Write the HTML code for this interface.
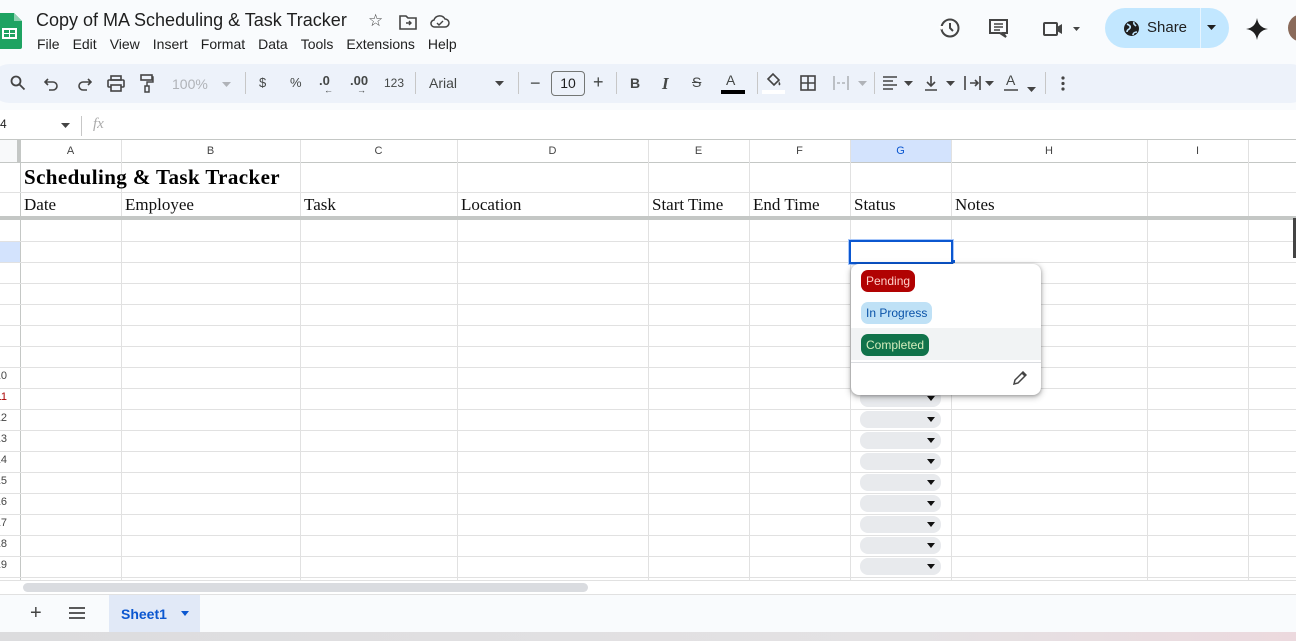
<!DOCTYPE html>
<html><head><meta charset="utf-8"><style>
*{margin:0;padding:0;box-sizing:border-box}
body{width:1296px;height:641px;overflow:hidden;background:#fff;font-family:"Liberation Sans",Arial,sans-serif;position:relative;color:#444746}
.a{position:absolute}
.v{position:absolute;top:140px;width:1px;height:441px;background:#e1e1e1}
.h{position:absolute;left:0;width:1296px;height:1px;background:#e1e1e1}
.ch{position:absolute;top:140px;height:23px;font-size:11px;color:#444;text-align:center;line-height:23px}
.serif{font-family:"Liberation Serif",serif;font-size:17px;color:#111}
.menu span{margin-right:13px}
.tb{position:absolute;top:74px;font-size:14px;color:#444746}
.rn{position:absolute;left:-13px;width:20px;font-size:11px;text-align:right;color:#444}
.chip{position:absolute;left:860px;width:81px;height:17px;border-radius:8px;background:#e8eaed}
.chip:after{content:"";position:absolute;right:6px;top:6px;border-left:4px solid transparent;border-right:4px solid transparent;border-top:5px solid #111}
</style></head><body>
<div class="a" style="left:0;top:0;width:1296px;height:63px;background:#f9fbfd"></div>
<svg class="a" style="left:0;top:13px" width="22" height="36" viewBox="0 0 22 36"><path d="M0 0h14l8 8v26a2 2 0 0 1-2 2H0z" fill="#1ea362"/><path d="M14 0v8h8z" fill="#8ed1b1"/><rect x="2" y="15" width="15" height="11" fill="#fff"/><rect x="4" y="17" width="5" height="3" fill="#1ea362"/><rect x="10" y="17" width="5" height="3" fill="#1ea362"/><rect x="4" y="21" width="5" height="3" fill="#1ea362"/><rect x="10" y="21" width="5" height="3" fill="#1ea362"/></svg>
<div class="a" style="left:36px;top:10px;font-size:18px;color:#1f1f1f">Copy of MA Scheduling &amp; Task Tracker</div>
<div class="a" style="left:368px;top:11px;font-size:17px;color:#444">☆</div>
<svg class="a" style="left:399px;top:14px" width="18" height="16"><path d="M1 2h6l2 2h8v11H1z" fill="none" stroke="#444" stroke-width="1.6"/><path d="M7 9h5m-2-2 2 2-2 2" stroke="#444" fill="none" stroke-width="1.4"/></svg>
<svg class="a" style="left:430px;top:14px" width="20" height="15"><path d="M5 13h10a4 4 0 0 0 0-8 6 6 0 0 0-11 1 3.5 3.5 0 0 0 1 7z" fill="none" stroke="#444" stroke-width="1.5"/><path d="M7 9l2 2 4-4" fill="none" stroke="#444" stroke-width="1.4"/></svg>
<div class="a menu" style="left:37px;top:36px;font-size:14px;color:#1f1f1f"><span>File</span><span>Edit</span><span>View</span><span>Insert</span><span>Format</span><span>Data</span><span>Tools</span><span>Extensions</span><span>Help</span></div>
<svg class="a" style="left:938px;top:17px" width="24" height="22"><circle cx="12" cy="11" r="8.5" fill="none" stroke="#444" stroke-width="2"/><path d="M12 6v5l3 3" stroke="#444" stroke-width="2" fill="none"/><path d="M1 9l2.5 3 3-3" fill="#fff" stroke="#fff"/></svg>
<svg class="a" style="left:988px;top:18px" width="22" height="22"><path d="M2 2h17v13h-4l3 4-6-4H2z" fill="none" stroke="#444" stroke-width="2"/><path d="M6 6h9M6 9h9M6 12h6" stroke="#444" stroke-width="1.6"/></svg>
<svg class="a" style="left:1042px;top:20px" width="42" height="18"><rect x="2" y="3" width="13" height="12" rx="1" fill="none" stroke="#444" stroke-width="2"/><path d="M15 7l5-3v10l-5-3z" fill="#444"/><path d="M31 7h7l-3.5 4z" fill="#444"/></svg>
<div class="a" style="left:1105px;top:8px;width:124px;height:40px;border-radius:20px;background:#c2e7ff"></div>
<div class="a" style="left:1200px;top:8px;width:1px;height:40px;background:#e6f4ff"></div>
<svg class="a" style="left:1123px;top:20px" width="17" height="17"><circle cx="8.5" cy="8.5" r="7.5" fill="#1f1f1f"/><path d="M4 4c2 1 4 2 3 4s-3 1-3 4M11 2c-1 2 1 3 2 4M10 15c0-2 2-3 4-3" stroke="#c2e7ff" stroke-width="1.6" fill="none"/></svg>
<div class="a" style="left:1147px;top:19px;font-size:15px;color:#1f1f1f">Share</div>
<svg class="a" style="left:1207px;top:25px" width="10" height="6"><path d="M0 0h9l-4.5 5z" fill="#1f1f1f"/></svg>
<svg class="a" style="left:1246px;top:18px" width="22" height="22"><path d="M11 0C12 6 15 10 22 11 15 12 12 16 11 22 10 16 7 12 0 11 7 10 10 6 11 0z" fill="#1f1f1f"/></svg>
<div class="a" style="left:1288px;top:14px;width:28px;height:28px;border-radius:50%;background:#8a6a5a"></div>
<div class="a" style="left:0;top:63px;width:1296px;height:47px;background:#f9fbfd"></div>
<div class="a" style="left:-10px;top:64px;width:1320px;height:39px;border-radius:20px;background:#edf2fa"></div>
<svg class="a" style="left:10px;top:75px" width="16" height="16"><circle cx="6" cy="6" r="4.5" fill="none" stroke="#444" stroke-width="1.8"/><path d="M9.5 9.5l5 5" stroke="#444" stroke-width="1.8"/></svg>
<svg class="a" style="left:44px;top:77px" width="16" height="14"><path d="M4 2L1 5l3 3M1 5h8a4 4 0 0 1 0 8H5" fill="none" stroke="#444" stroke-width="1.6"/></svg>
<svg class="a" style="left:76px;top:77px" width="16" height="14"><path d="M12 2l3 3-3 3M15 5H7a4 4 0 0 0 0 8h4" fill="none" stroke="#444" stroke-width="1.6"/></svg>
<svg class="a" style="left:107px;top:75px" width="18" height="17"><rect x="4" y="1" width="10" height="4" fill="none" stroke="#444" stroke-width="1.6"/><rect x="1" y="5" width="16" height="7" rx="1" fill="none" stroke="#444" stroke-width="1.6"/><rect x="4" y="10" width="10" height="6" fill="#edf2fa" stroke="#444" stroke-width="1.6"/></svg>
<svg class="a" style="left:140px;top:74px" width="14" height="19"><rect x="1" y="1" width="11" height="5" fill="none" stroke="#444" stroke-width="1.6"/><path d="M12 3h1v5H7v4" fill="none" stroke="#444" stroke-width="1.4"/><rect x="5" y="12" width="4" height="6" fill="none" stroke="#444" stroke-width="1.5"/></svg>
<div class="tb" style="left:172px;top:76px;color:#b0b3b8">100%</div>
<svg class="a" style="left:222px;top:82px" width="9" height="5"><path d="M0 0h9l-4.5 5z" fill="#b0b3b8"/></svg>
<div class="a" style="left:245px;top:72px;width:1px;height:22px;background:#c7c7c7"></div>
<div class="tb" style="left:259px;top:75px;font-size:13px">$</div>
<div class="tb" style="left:290px;top:75px;font-size:13px">%</div>
<div class="tb" style="left:319px;top:73px;font-size:13px;font-weight:bold">.0</div>
<div class="a" style="left:324px;top:85px;font-size:9px">←</div>
<div class="tb" style="left:350px;top:73px;font-size:13px;font-weight:bold">.00</div>
<div class="a" style="left:357px;top:85px;font-size:9px">→</div>
<div class="tb" style="left:384px;top:76px;font-size:12px">123</div>
<div class="a" style="left:415px;top:72px;width:1px;height:22px;background:#c7c7c7"></div>
<div class="tb" style="left:429px;top:75px">Arial</div>
<svg class="a" style="left:495px;top:81px" width="9" height="5"><path d="M0 0h9l-4.5 5z" fill="#444"/></svg>
<div class="a" style="left:518px;top:72px;width:1px;height:22px;background:#c7c7c7"></div>
<div class="tb" style="left:530px;top:73px;font-size:18px">−</div>
<div class="a" style="left:551px;top:71px;width:34px;height:25px;border:1px solid #747775;border-radius:4px;font-size:14px;text-align:center;line-height:23px;color:#1f1f1f">10</div>
<div class="tb" style="left:593px;top:72px;font-size:18px">+</div>
<div class="a" style="left:616px;top:72px;width:1px;height:22px;background:#c7c7c7"></div>
<div class="tb" style="left:630px;top:75px;font-weight:bold">B</div>
<div class="tb" style="left:662px;top:74px;font-style:italic;font-family:'Liberation Serif',serif;font-size:17px;font-weight:bold">I</div>
<div class="tb" style="left:692px;top:74px;text-decoration:line-through">S</div>
<div class="tb" style="left:726px;top:72px">A</div>
<div class="a" style="left:721px;top:90px;width:24px;height:4px;background:#000"></div>
<div class="a" style="left:757px;top:72px;width:1px;height:22px;background:#c7c7c7"></div>
<svg class="a" style="left:765px;top:72px" width="18" height="16"><path d="M3 7l5-5 6 6-5 5z" fill="none" stroke="#444" stroke-width="1.6"/><path d="M14 9c1 2 2 3 1 4s-2 0-1-4z" fill="#444"/></svg>
<div class="a" style="left:762px;top:90px;width:23px;height:4px;background:#fff"></div>
<svg class="a" style="left:800px;top:75px" width="16" height="16"><rect x="1" y="1" width="14" height="14" fill="none" stroke="#444" stroke-width="1.6"/><path d="M8 1v14M1 8h14" stroke="#444" stroke-width="1.6"/></svg>
<svg class="a" style="left:833px;top:75px" width="34" height="16"><path d="M1 1v14M15 1v14M4 8h3M9 8h3" stroke="#b0b3b8" stroke-width="1.6" fill="none"/><path d="M25 6h9l-4.5 5z" fill="#b0b3b8"/></svg>
<div class="a" style="left:874px;top:72px;width:1px;height:22px;background:#c7c7c7"></div>
<svg class="a" style="left:882px;top:76px" width="32" height="14"><path d="M1 1h14M1 5h10M1 9h14M1 13h10" stroke="#444" stroke-width="1.6"/><path d="M22 5h9l-4.5 5z" fill="#444"/></svg>
<svg class="a" style="left:924px;top:75px" width="32" height="16"><path d="M7 1v9M3 7l4 4 4-4M1 15h12" stroke="#444" stroke-width="1.6" fill="none"/><path d="M22 6h9l-4.5 5z" fill="#444"/></svg>
<svg class="a" style="left:964px;top:75px" width="32" height="16"><path d="M1 1v14M6 8h8M11 5l3 3-3 3M16 1v14" stroke="#444" stroke-width="1.6" fill="none"/><path d="M21 6h9l-4.5 5z" fill="#444"/></svg>
<div class="tb" style="left:1006px;top:72px">A</div>
<svg class="a" style="left:1003px;top:87px" width="36" height="6"><path d="M1 3h14" stroke="#444" stroke-width="1.5"/><path d="M24 0h9l-4.5 5z" fill="#444"/></svg>
<div class="a" style="left:1045px;top:72px;width:1px;height:22px;background:#c7c7c7"></div>
<svg class="a" style="left:1061px;top:76px" width="4" height="15"><circle cx="2" cy="2" r="1.6" fill="#444"/><circle cx="2" cy="7.5" r="1.6" fill="#444"/><circle cx="2" cy="13" r="1.6" fill="#444"/></svg>
<div class="a" style="left:0;top:117px;font-size:12px;color:#1f1f1f">4</div>
<svg class="a" style="left:61px;top:123px" width="9" height="5"><path d="M0 0h9l-4.5 5z" fill="#444"/></svg>
<div class="a" style="left:81px;top:116px;width:1px;height:20px;background:#c7c7c7"></div>
<div class="a" style="left:93px;top:116px;font-family:'Liberation Serif',serif;font-style:italic;font-size:15px;color:#aaa">fx</div>
<div class="a" style="left:0;top:139px;width:1296px;height:1px;background:#c4c7c5"></div>
<div class="a" style="left:0;top:140px;width:20px;height:23px;background:#f8f9fa"></div>
<div class="a" style="left:17px;top:140px;width:4px;height:23px;background:#c4c7c5"></div>
<div class="a" style="left:850px;top:140px;width:101px;height:23px;background:#d3e3fd"></div>
<div class="a" style="left:0;top:162px;width:1296px;height:1px;background:#c4c7c5"></div>
<div class="ch" style="left:20px;width:101px">A</div>
<div class="ch" style="left:121px;width:179px">B</div>
<div class="ch" style="left:300px;width:157px">C</div>
<div class="ch" style="left:457px;width:191px">D</div>
<div class="ch" style="left:648px;width:101px">E</div>
<div class="ch" style="left:749px;width:101px">F</div>
<div class="ch" style="left:850px;width:101px;color:#0b57d0">G</div>
<div class="ch" style="left:951px;width:196px">H</div>
<div class="ch" style="left:1147px;width:101px">I</div>
<div class="v" style="left:20px;background:#c4c7c5"></div>
<div class="v" style="left:121px"></div><div class="v" style="left:300px"></div><div class="v" style="left:457px"></div><div class="v" style="left:648px"></div><div class="v" style="left:749px"></div><div class="v" style="left:850px"></div><div class="v" style="left:951px"></div><div class="v" style="left:1147px"></div><div class="v" style="left:1248px"></div>
<div class="h" style="top:192px"></div>
<div class="a" style="left:0;top:216px;width:1296px;height:4px;background:#c4c7c5"></div>
<div class="h" style="top:241px"></div><div class="h" style="top:262px"></div><div class="h" style="top:283px"></div><div class="h" style="top:304px"></div><div class="h" style="top:325px"></div><div class="h" style="top:346px"></div><div class="h" style="top:367px"></div><div class="h" style="top:388px"></div><div class="h" style="top:409px"></div><div class="h" style="top:430px"></div><div class="h" style="top:451px"></div><div class="h" style="top:472px"></div><div class="h" style="top:493px"></div><div class="h" style="top:514px"></div><div class="h" style="top:535px"></div><div class="h" style="top:556px"></div><div class="h" style="top:577px"></div>
<div class="a" style="left:0;top:242px;width:20px;height:20px;background:#d3e3fd"></div>
<div class="a" style="left:1293px;top:218px;width:3px;height:40px;background:#444"></div>
<div class="rn" style="top:370px">10</div><div class="rn" style="top:391px;color:#a00">11</div><div class="rn" style="top:412px">12</div><div class="rn" style="top:433px">13</div><div class="rn" style="top:454px">14</div><div class="rn" style="top:475px">15</div><div class="rn" style="top:496px">16</div><div class="rn" style="top:517px">17</div><div class="rn" style="top:538px">18</div><div class="rn" style="top:559px">19</div>
<div class="a serif" style="left:24px;top:165px;font-size:21px;font-weight:bold;color:#000;letter-spacing:0.4px">Scheduling &amp; Task Tracker</div>
<div class="a serif" style="left:24px;top:195px">Date</div>
<div class="a serif" style="left:125px;top:195px">Employee</div>
<div class="a serif" style="left:304px;top:195px">Task</div>
<div class="a serif" style="left:461px;top:195px">Location</div>
<div class="a serif" style="left:652px;top:195px">Start Time</div>
<div class="a serif" style="left:753px;top:195px">End Time</div>
<div class="a serif" style="left:854px;top:195px">Status</div>
<div class="a serif" style="left:955px;top:195px">Notes</div>
<div class="chip" style="top:390px"></div><div class="chip" style="top:411px"></div><div class="chip" style="top:432px"></div><div class="chip" style="top:453px"></div><div class="chip" style="top:474px"></div><div class="chip" style="top:495px"></div><div class="chip" style="top:516px"></div><div class="chip" style="top:537px"></div><div class="chip" style="top:558px"></div>
<div class="a" style="left:849px;top:240px;width:104px;height:24px;border:2px solid #0b57d0;box-shadow:0 0 0 1px #a8c7fa"></div>
<div class="a" style="left:952px;top:260px;width:3px;height:3px;background:#0b57d0"></div>
<div class="a" style="left:851px;top:264px;width:190px;height:131px;background:#fff;border-radius:8px;box-shadow:0 1px 3px rgba(0,0,0,.3),0 2px 6px 2px rgba(0,0,0,.15);overflow:hidden">
<div class="a" style="left:0;top:64px;width:190px;height:32px;background:#f1f3f4"></div>
<div class="a" style="left:10px;top:6px;padding:0 5px;height:22px;line-height:22px;border-radius:7px;background:#b10202;color:#ffcfc9;font-size:12px">Pending</div>
<div class="a" style="left:10px;top:38px;padding:0 5px;height:22px;line-height:22px;border-radius:7px;background:#bfe1f6;color:#0a53a8;font-size:12px">In Progress</div>
<div class="a" style="left:10px;top:70px;padding:0 5px;height:22px;line-height:22px;border-radius:7px;background:#11734b;color:#d4edbc;font-size:12px">Completed</div>
<div class="a" style="left:0;top:98px;width:190px;height:1px;background:#dadce0"></div>
<svg class="a" style="left:162px;top:107px" width="14" height="14"><path d="M1 13l1-4 8-8 3 3-8 8z M9 2l3 3" fill="none" stroke="#444" stroke-width="1.5"/></svg>
</div>
<div class="a" style="left:0;top:580px;width:1296px;height:14px;background:#fff;border-top:1px solid #e1e1e1"></div>
<div class="a" style="left:23px;top:583px;width:565px;height:9px;border-radius:5px;background:#dadce0"></div>
<div class="a" style="left:0;top:594px;width:1296px;height:38px;background:#f9fbfd;border-top:1px solid #e1e1e1"></div>
<div class="a" style="left:30px;top:602px;font-size:20px;color:#444">+</div>
<svg class="a" style="left:69px;top:607px" width="16" height="12"><path d="M0 1h16M0 6h16M0 11h16" stroke="#444" stroke-width="1.8"/></svg>
<div class="a" style="left:109px;top:595px;width:91px;height:37px;background:#e1e9f7"></div>
<div class="a" style="left:121px;top:606px;font-size:14px;font-weight:bold;color:#0b57d0">Sheet1</div>
<svg class="a" style="left:181px;top:611px" width="8" height="5"><path d="M0 0h8l-4 5z" fill="#0b57d0"/></svg>
<div class="a" style="left:0;top:632px;width:1296px;height:9px;background:linear-gradient(90deg,#dcdcde,#e4e2e4 70%,#ecd9de)"></div>
</body></html>
